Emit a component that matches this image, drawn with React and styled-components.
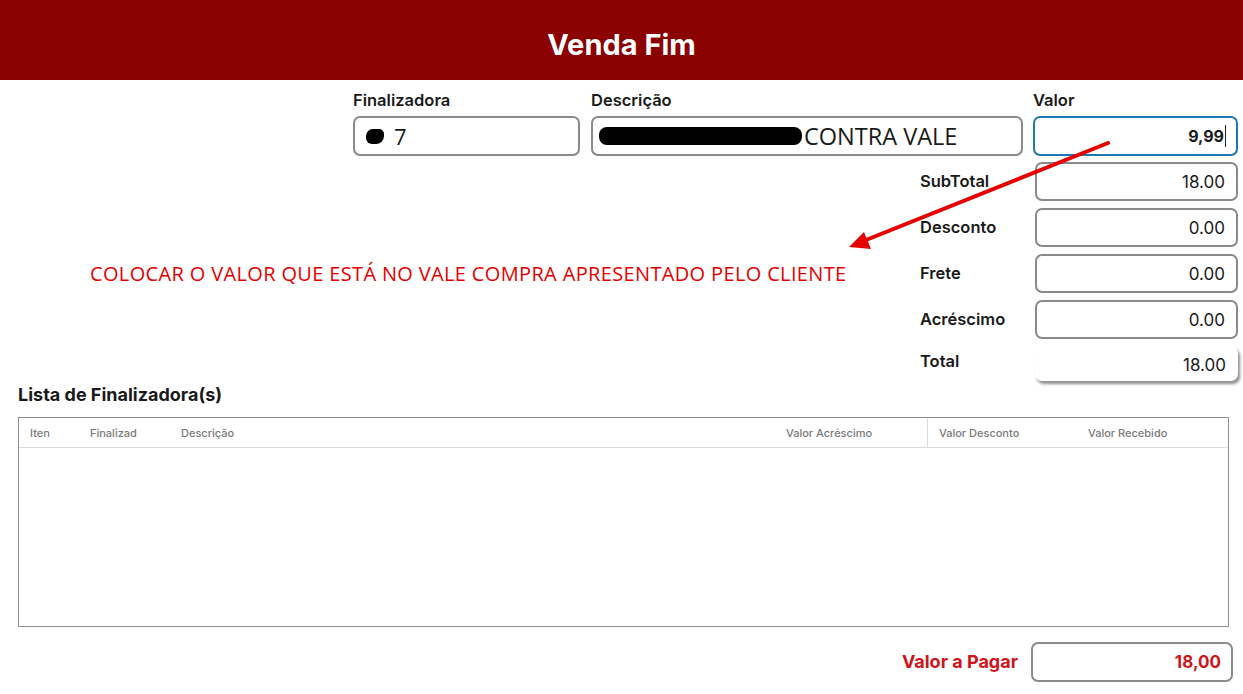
import React from 'react';
import styled, { createGlobalStyle } from "styled-components";

const GlobalStyle = createGlobalStyle`
    body {
        margin: 0;
        background: #fff;
        font-family: Inter, "Noto Sans", sans-serif;
        color: #1a1a1a;
    }
`

const Page = styled.div`
    position: relative;
    width: 1243px;
    height: 694px;
    overflow: hidden;
`

const Header = styled.header`
    height: 80px;
    background: #8b0000;
    display: flex;
    align-items: center;
    justify-content: center;
    color: #fff;
    font-size: 29px;
    font-weight: 700;
    padding-top: 8px;
    box-sizing: border-box;
`

const Form = styled.div`
    padding: 11px 5px 0 0;
    display: flex;
    flex-direction: column;
`

const TopRow = styled.div`
    display: flex;
    justify-content: flex-end;
    gap: 10px;
`

const Field = styled.div`
    width: ${p => p.w}px;
    margin-right: ${p => p.mr || 0}px;
    display: flex;
    flex-direction: column;
`

const Label = styled.label`
    font-size: ${p => p.fs || 16.5}px;
    font-weight: ${p => p.red ? 700 : 600};
    line-height: 18px;
    color: ${p => p.red ? '#d0141a' : '#1a1a1a'};
    margin-bottom: ${p => p.mb || 0}px;
`

const Box = styled.div`
    height: ${p => p.h || 40}px;
    box-sizing: border-box;
    border: 2px solid ${p => p.focus ? '#1f78b4' : '#8a8a8a'};
    border-radius: 7px;
    display: flex;
    align-items: center;
    justify-content: ${p => p.left ? 'flex-start' : 'flex-end'};
    padding: 0 10px;
    font-size: ${p => p.fs || 17}px;
    font-weight: ${p => p.bold ? 700 : 400};
    color: ${p => p.red ? '#d0141a' : '#1a1a1a'};
    font-family: ${p => p.calibri ? '"Open Sans", "Liberation Sans", sans-serif' : 'Inter, sans-serif'};
    width: ${p => p.w ? p.w + 'px' : 'auto'};
`

const Caret = styled.span`
    display: inline-block;
    width: 1px;
    height: 22px;
    background: #222;
    margin-left: 1px;
`

const Redact = styled.span`
    display: inline-block;
    width: 203px;
    height: 18px;
    background: #000;
    border-radius: 8px;
    margin: 0 2px 0 -4px;
`

const Blob = styled.span`
    display: inline-block;
    width: 18px;
    height: 15px;
    background: #000;
    border-radius: 7px 5px 8px 6px;
    margin: 0 10px 0 1px;
`

const Summary = styled.div`
    display: flex;
    flex-direction: column;
    gap: 7px;
    margin-top: 6px;
`

const SumRow = styled.div`
    display: flex;
    justify-content: flex-end;
    align-items: center;
`

const SumLabel = styled.div`
    width: 115px;
    font-size: 16.5px;
    font-weight: 600;
    margin-top: ${p => p.up ? -6 : -2}px;
`

const TotalBox = styled.div`
    width: 203px;
    height: 35px;
    box-sizing: border-box;
    border-radius: 7px;
    box-shadow: 2px 3px 3px rgba(0, 0, 0, 0.45);
    display: flex;
    align-items: center;
    justify-content: flex-end;
    padding: 2px 12px 0 0;
    font-size: 17px;
`

const ListTitle = styled.h2`
    margin: 4px 0 0 18px;
    font-size: 18px;
    font-weight: 700;
    line-height: 20px;
`

const Table = styled.div`
    margin: 12px 9px 0 18px;
    height: 210px;
    box-sizing: border-box;
    border: 1.5px solid #8f8f8f;
`

const HeadRow = styled.div`
    display: grid;
    grid-template-columns: 60px 91px 605px 152px 150px 1fr;
    height: 29px;
    border-bottom: 1px solid #dcdcdc;
`

const HeadCell = styled.div`
    display: flex;
    align-items: center;
    padding-left: 11px;
    font-size: 11px;
    font-weight: 500;
    color: #7a7a7a;
    white-space: nowrap;
    border-left: ${p => p.sep ? '1px solid #dcdcdc' : 'none'};
`

const PayRow = styled.div`
    display: flex;
    justify-content: flex-end;
    align-items: center;
    gap: 13px;
    margin: 15px 5px 0 0;
`

const Note = styled.div`
    position: absolute;
    left: 90px;
    top: 260px;
    color: #e60000;
    font-family: "Open Sans", "Liberation Sans", sans-serif;
    font-size: 20px;
    letter-spacing: 0.35px;
    white-space: nowrap;
`

const Arrow = styled.svg`
    position: absolute;
    left: 0;
    top: 0;
    pointer-events: none;
`

export default function App() {
    return (
        <Page>
            <GlobalStyle />
            <Header>Venda Fim</Header>
            <Form>
                <TopRow>
                    <Field w={227} mr={1}>
                        <Label mb={7}>Finalizadora</Label>
                        <Box left fs={22} calibri><Blob />7</Box>
                    </Field>
                    <Field w={432}>
                        <Label mb={7}>Descrição</Label>
                        <Box left fs={23.5} calibri><Redact />CONTRA VALE</Box>
                    </Field>
                    <Field w={205}>
                        <Label mb={7}>Valor</Label>
                        <Box focus bold fs={16}>9,99<Caret /></Box>
                    </Field>
                </TopRow>
                <Summary>
                    {[['SubTotal', '18.00'], ['Desconto', '0.00'], ['Frete', '0.00'], ['Acréscimo', '0.00']].map(([l, v]) => (
                        <SumRow key={l}>
                            <SumLabel>{l}</SumLabel>
                            <Box w={203} h={39} style={{ paddingRight: 11 }}>{v}</Box>
                        </SumRow>
                    ))}
                    <SumRow>
                        <SumLabel up>Total</SumLabel>
                        <TotalBox>18.00</TotalBox>
                    </SumRow>
                </Summary>
                <ListTitle>Lista de Finalizadora(s)</ListTitle>
                <Table>
                    <HeadRow>
                        <HeadCell>Iten</HeadCell>
                        <HeadCell>Finalizad</HeadCell>
                        <HeadCell>Descrição</HeadCell>
                        <HeadCell>Valor Acréscimo</HeadCell>
                        <HeadCell sep>Valor Desconto</HeadCell>
                        <HeadCell>Valor Recebido</HeadCell>
                    </HeadRow>
                </Table>
                <PayRow>
                    <Label red fs={18}>Valor a Pagar</Label>
                    <Box w={202} h={40} red bold>18,00</Box>
                </PayRow>
            </Form>
            <Note>COLOCAR O VALOR QUE ESTÁ NO VALE COMPRA APRESENTADO PELO CLIENTE</Note>
            <Arrow width="1243" height="694">
                <line x1="1108" y1="143" x2="866" y2="240" stroke="#e60000" strokeWidth="4" strokeLinecap="round" />
                <polygon points="849,247 864,232 871,249" fill="#e60000" />
            </Arrow>
        </Page>
    )
}
